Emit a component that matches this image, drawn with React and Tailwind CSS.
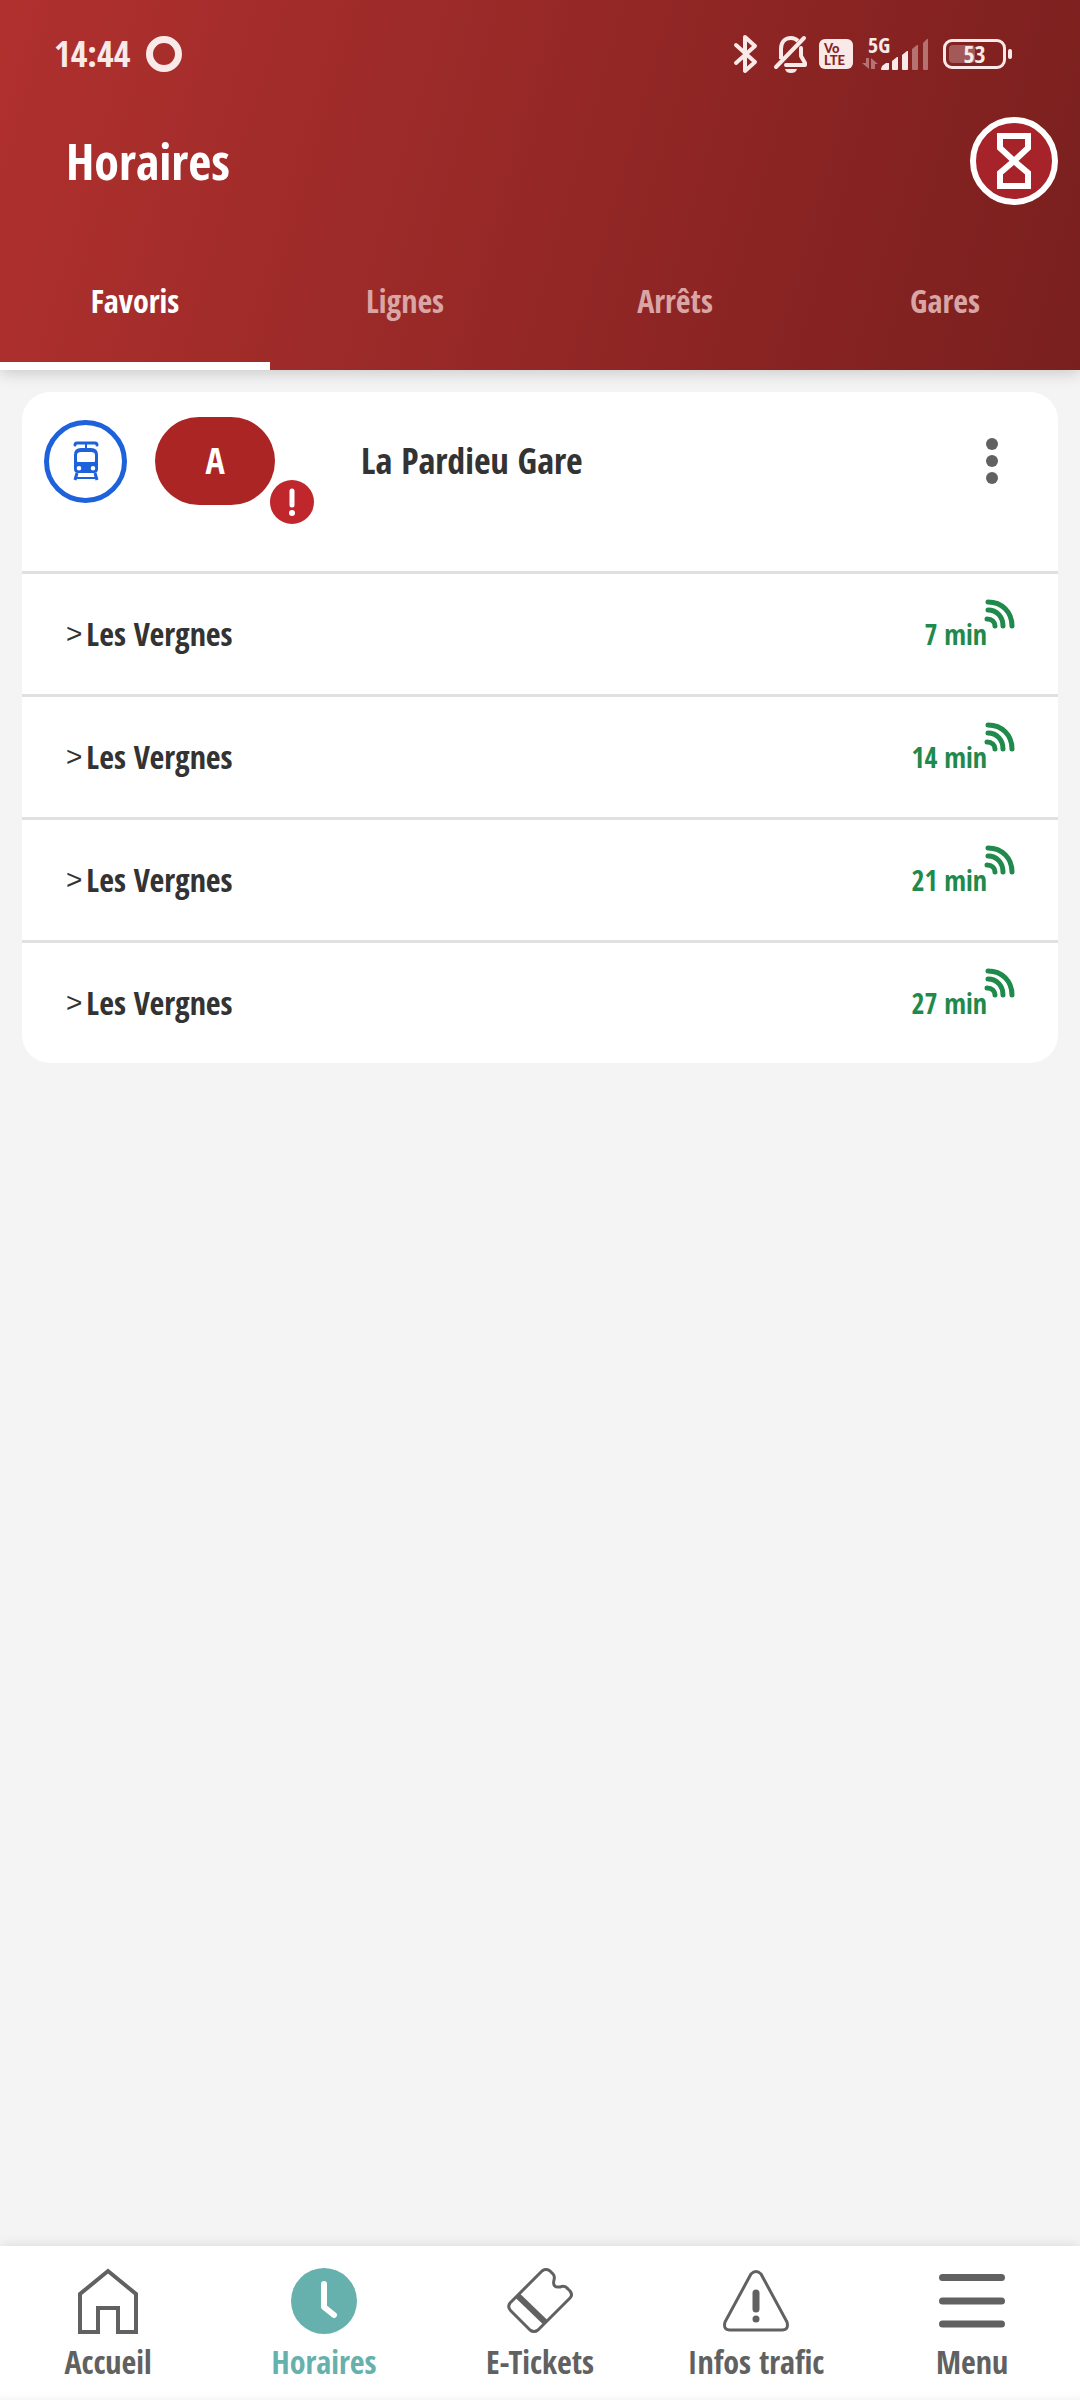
import React, { useState } from "react";

const TABS = ["Favoris", "Lignes", "Arrêts", "Gares"];
const DEPARTURES = [
  { to: "Les Vergnes", wait: "7 min" },
  { to: "Les Vergnes", wait: "14 min" },
  { to: "Les Vergnes", wait: "21 min" },
  { to: "Les Vergnes", wait: "27 min" },
];

function BluetoothIcon() {
  return (
    <svg width="26" height="40" viewBox="0 0 26 40" fill="none" stroke="currentColor" strokeWidth="4" strokeLinecap="round" strokeLinejoin="round">
      <path d="M3 11 L22 28 L12 37 V3 L22 12 L3 29" />
    </svg>
  );
}

function MutedBellIcon() {
  return (
    <svg width="36" height="40" viewBox="0 0 36 40" fill="none" stroke="currentColor" strokeWidth="4">
      <path d="M3 33 L31 4" strokeLinecap="round" />
      <path d="M8 25 V15 C8 7 13 4 18 4 C21 4 23 5 25 7" />
      <path d="M28 14 V22 L32 29 V31 H13" strokeLinejoin="round" strokeLinecap="round" />
      <path d="M12 35 H24 C23 38 21 39 18 39 C15 39 13 38 12 35 Z" fill="currentColor" stroke="none" />
    </svg>
  );
}

function SignalIcon() {
  return (
    <svg width="67" height="34" viewBox="0 0 67 34" fill="currentColor">
      <g opacity="0.4">
        <path d="M4 21 H7 V32 L0 26 H4 Z" />
        <path d="M9 21 L16 27 H13 V32 H9 Z" />
      </g>
      <path d="M20 29 L24 26 H27 V32 Q27 33 26 33 H20 Q19 33 19 32 Z" />
      <path d="M30 24 L35 20 H36 V32 Q36 33 35 33 H31 Q30 33 30 32 Z" />
      <path d="M40 18 L45 14 H46 V32 Q46 33 45 33 H41 Q40 33 40 32 Z" />
      <path opacity="0.4" d="M50 12 L55 8 H56 V32 Q56 33 55 33 H51 Q50 33 50 32 Z" />
      <path opacity="0.4" d="M61 6 L65 2 H66 V32 Q66 33 65 33 H62 Q61 33 61 32 Z" />
    </svg>
  );
}

function HourglassIcon() {
  return (
    <svg width="34" height="56" viewBox="0 0 34 56" fill="none" stroke="currentColor" strokeWidth="6">
      <path d="M3 3 H31 V15 L17 28 L3 15 Z" />
      <path d="M3 53 H31 V40 L17 28 L3 40 Z" />
    </svg>
  );
}

function TramIcon() {
  return (
    <svg width="26" height="40" viewBox="0 0 26 40" fill="none" stroke="currentColor">
      <path d="M2 4 Q2 2 4 2 H22 Q24 2 24 4" strokeWidth="3" strokeLinecap="round" />
      <path d="M13 2 V8" strokeWidth="2" />
      <path
        fill="currentColor"
        stroke="none"
        fillRule="evenodd"
        d="M8 7 H18 Q25 7 25 14 V28 Q25 32 21 32 H5 Q1 32 1 28 V14 Q1 7 8 7 Z M8 11 Q4 11 4 14 V20 Q4 21 5 21 H21 Q22 21 22 20 V14 Q22 11 18 11 Z M6 25 A2.300 2.300 0 1 0 6 29.600 A2.300 2.300 0 1 0 6 25 Z M20 25 A2.300 2.300 0 1 0 20 29.600 A2.300 2.300 0 1 0 20 25 Z"
      />
      <path d="M4 32 L2 39 M22 32 L24 39" strokeWidth="3" />
      <path d="M3 37 H23" strokeWidth="2" />
    </svg>
  );
}

function LiveIcon() {
  return (
    <svg className="absolute -top-4 -right-7" width="31" height="32" viewBox="0 0 31 32" fill="none" stroke="currentColor" strokeWidth="5" strokeLinecap="round">
      <path d="M4 4 C18 4 28 14 28 28" />
      <path d="M4 12 C13 12 19 19 19 28" />
      <path d="M3 21 C8 21 11 24 11 28" />
    </svg>
  );
}

function HomeIcon() {
  return (
    <svg width="66" height="66" viewBox="0 0 66 66" fill="none" stroke="currentColor" strokeWidth="4">
      <path d="M5 64 V26 L33 3 L61 26 V64 H43 V40 H23 V64 Z" />
    </svg>
  );
}

function ClockIcon() {
  return (
    <svg width="66" height="66" viewBox="0 0 66 66">
      <circle cx="33" cy="33" r="33" fill="currentColor" />
      <path d="M33 16 V39 L43 47" fill="none" stroke="white" strokeWidth="6" strokeLinecap="round" strokeLinejoin="round" />
    </svg>
  );
}

function TicketIcon() {
  return (
    <svg width="66" height="66" viewBox="0 0 66 66" fill="none" stroke="currentColor" strokeWidth="3" strokeLinejoin="round">
      <path d="M3 35 L35 3 Q39 0 43 3 L46 6 Q48 8 47 12 Q45 20 53 19 Q58 17 61 21 L63 23 Q66 27 63 30 L31 62 Q27 65 23 62 L4 43 Q0 39 3 35 Z" />
      <path d="M11 28 L38 54" strokeWidth="6" />
    </svg>
  );
}

function WarningIcon() {
  return (
    <svg width="66" height="66" viewBox="0 0 66 66" fill="none" stroke="currentColor">
      <path d="M28 6 Q33 1 38 6 L64 54 Q66 62 59 62 H7 Q0 62 2 54 Z" strokeWidth="3" />
      <path d="M33 25 V41" strokeWidth="7" strokeLinecap="round" />
      <circle cx="33" cy="51" r="3.500" fill="currentColor" stroke="none" />
    </svg>
  );
}

function MenuIcon() {
  return (
    <svg width="66" height="66" viewBox="0 0 66 66" fill="none" stroke="currentColor" strokeWidth="7" strokeLinecap="round">
      <path d="M3.500 9.500 H62.500 M3.500 33 H62.500 M3.500 56 H62.500" />
    </svg>
  );
}

const NAV = [
  { label: "Accueil", Icon: HomeIcon },
  { label: "Horaires", Icon: ClockIcon },
  { label: "E-Tickets", Icon: TicketIcon },
  { label: "Infos trafic", Icon: WarningIcon },
  { label: "Menu", Icon: MenuIcon },
];

function StatusBar() {
  return (
    <div className="flex h-[108px] items-center pr-[68px] pl-[54px] text-[#f9e9e9]">
      <span className="w-[92px] text-[36px] font-bold leading-none">14:44</span>
      <span className="size-9 rounded-full border-7 border-current" />
      <div className="ml-auto flex items-center">
        <BluetoothIcon />
        <span className="ml-[14px]"><MutedBellIcon /></span>
        <span className="ml-[10px] flex h-[30px] w-[34px] flex-col justify-center rounded-md bg-[#f9e9e9] pl-[5px] font-['Lato',sans-serif] text-[13px] leading-[12px] font-black text-[#852423]">
          <span>Vo</span>
          <span>LTE</span>
        </span>
        <span className="relative ml-[9px]">
          <SignalIcon />
          <span className="absolute -top-[3px] left-[6px] text-[22px] leading-[20px] font-bold">5G</span>
        </span>
        <span className="ml-[14px] flex h-[30px] w-[63px] rounded-[9px] border-3 border-current p-[3px]">
          <span className="relative flex grow items-center justify-center">
            <span className="absolute inset-y-0 left-0 w-1/2 rounded-sm bg-white/25" />
            <span className="relative text-[24px] leading-none font-bold">53</span>
          </span>
        </span>
        <span className="ml-[2px] h-[10px] w-1 rounded-sm bg-current" />
      </div>
    </div>
  );
}

export default function App() {
  const [tab, setTab] = useState("Favoris");
  const [page, setPage] = useState("Horaires");

  return (
    <div className="flex min-h-screen flex-col bg-[#f4f4f4] font-['Open_Sans_Condensed','Roboto_Condensed','Liberation_Sans',sans-serif] text-[#333333]">
      <header className="bg-[linear-gradient(106deg,#b0302e_0%,#9d2b29_35%,#872322_75%,#79201e_100%)] text-white shadow-[0_2px_16px_rgba(0,0,0,0.2)]">
        <StatusBar />
        <div className="flex items-center justify-between py-[9px] pr-[22px] pl-[66px]">
          <h1 className="text-[50px] leading-none font-bold">Horaires</h1>
          <button type="button" aria-label="Attente" className="flex size-[88px] items-center justify-center rounded-full border-6 border-white bg-[#a62429]">
            <HourglassIcon />
          </button>
        </div>
        <div role="tablist" className="mt-[18px] grid grid-cols-4">
          {TABS.map((name) => (
            <button
              key={name}
              type="button"
              role="tab"
              aria-selected={tab === name}
              onClick={() => setTab(name)}
              className={
                "h-[138px] border-y-8 border-t-transparent text-[32px] leading-10 font-bold " +
                (tab === name ? "border-b-white text-white" : "border-b-transparent text-[#d9a5a5]")
              }
            >
              {name}
            </button>
          ))}
        </div>
      </header>

      <main className="px-[22px] pt-[22px]">
        <section className="rounded-[28px] bg-white">
          <div className="flex h-[179px] items-start pt-[25px] pr-[60px] pl-[22px]">
            <div className="flex h-[88px] w-full items-center">
              <span className="flex size-[83px] shrink-0 items-center justify-center rounded-full border-5 border-[#1d62db] text-[#1d62db]">
                <TramIcon />
              </span>
              <span className="relative ml-7 flex h-[88px] w-[120px] shrink-0 items-center justify-center rounded-full bg-[#ab2524] text-[36px] font-bold text-white">
                A
                <svg className="absolute -right-[39px] -bottom-[19px]" width="44" height="44" viewBox="0 0 44 44" role="img" aria-label="Perturbation">
                  <circle cx="22" cy="22" r="22" fill="#c0272d" />
                  <path d="M22 11 V25" stroke="white" strokeWidth="5" strokeLinecap="round" />
                  <circle cx="22" cy="33" r="3" fill="white" />
                </svg>
              </span>
              <h2 className="ml-[86px] text-[36px] leading-10 font-bold">La Pardieu Gare</h2>
              <button type="button" aria-label="Options" className="ml-auto flex flex-col gap-[5px] text-[#616161]">
                <span className="size-[12px] rounded-full bg-current" />
                <span className="size-[12px] rounded-full bg-current" />
                <span className="size-[12px] rounded-full bg-current" />
              </button>
            </div>
          </div>
          <ul>
            {DEPARTURES.map((d) => (
              <li key={d.wait} className="flex h-[123px] items-center justify-between border-t-3 border-[#e0e0e0] pr-[71px] pl-[44px]">
                <span className="flex items-center gap-1 text-[32px] leading-10 font-bold">
                  <span className="font-['Liberation_Sans'] text-[28px] font-normal">&gt;</span>
                  <span>{d.to}</span>
                </span>
                <span className="relative text-[28px] leading-10 font-bold text-[#1f8a4c]">
                  {d.wait}
                  <LiveIcon />
                </span>
              </li>
            ))}
          </ul>
        </section>
      </main>

      <nav className="mt-auto grid grid-cols-5 bg-white shadow-[0_0_12px_rgba(0,0,0,0.12),inset_0_-6px_6px_-4px_rgba(0,0,0,0.05)]">
        {NAV.map(({ label, Icon }) => (
          <a
            key={label}
            href={"#" + label}
            onClick={() => setPage(label)}
            className={
              "flex h-[154px] flex-col items-center gap-2 pt-[22px] text-[32px] leading-10 font-bold " +
              (page === label ? "text-[#66b0ad]" : "text-[#616161]")
            }
          >
            <Icon />
            {label}
          </a>
        ))}
      </nav>
    </div>
  );
}
